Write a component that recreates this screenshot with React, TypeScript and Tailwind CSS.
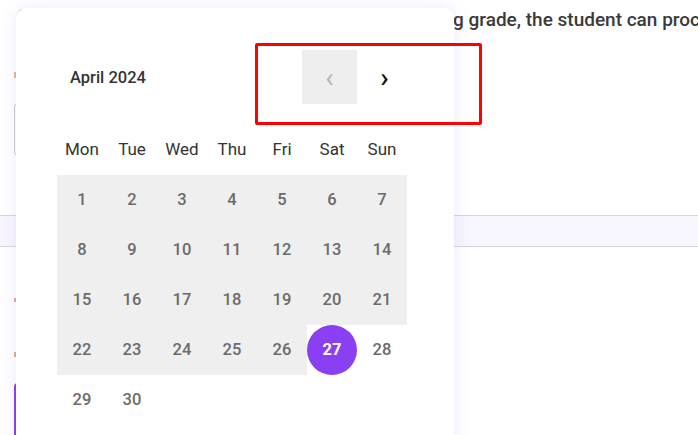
import React from "react";

const days = ["Mon", "Tue", "Wed", "Thu", "Fri", "Sat", "Sun"];

export default function App() {
  const cells: number[] = [];
  for (let i = 1; i <= 30; i++) cells.push(i);
  return (
    <div
      className="relative w-[698px] h-[435px] overflow-hidden bg-white"
      style={{ fontFamily: "Roboto, 'Noto Sans', sans-serif" }}
    >
      {/* background page (mostly covered by the popup) */}
      <div className="flex flex-col w-full">
        <div className="h-[8px] overflow-visible pl-[16px] pt-[6px] text-[24px] font-bold leading-[24px] text-[#222] whitespace-nowrap">
          Calculating final grades
        </div>
        <div className="flex pl-[453px] pt-[3px] h-[30px] whitespace-nowrap text-[19px] font-medium leading-[18px] text-[#3a3a3a]">
          g grade, the student can proceed to the next level
        </div>
        <div className="flex flex-col pl-[14px]">
          <div className="mt-[34px] w-[4px] h-[6px] bg-[#e8b98a]" />
          <div className="mt-[25px] w-[200px] h-[53px] rounded-[4px] border border-[#c9c9cc]" />
        </div>
        <div className="mt-[59px] w-full h-[32px] border-y border-[#d6d5db] bg-[#f8f6fe]" />
        <div className="flex flex-col pl-[14px]">
          <div className="mt-[51px] w-[4px] h-[4px] bg-[#e3a98a]" />
          <div className="mt-[50px] w-[4px] h-[5px] bg-[#e0ad80]" />
          <div className="mt-[26px] w-[120px] h-[60px] rounded-[4px] bg-[#8b3ff2]" />
        </div>
      </div>

      {/* popup */}
      <div className="absolute left-[16px] top-[8px] w-[438px] h-[450px] rounded-[10px] bg-white shadow-[0_0_18px_rgba(124,77,230,0.12)]">
        <div className="flex items-center pt-[42px] h-[96px]">
          <div className="pl-[54px] w-[286px] pt-[3px] text-[16.5px] font-medium text-[#333]">April 2024</div>
          <button className="w-[55px] h-[54px] bg-[#eeeeee] flex items-center justify-center text-[28px] leading-none pt-[2px] text-[#b5b5b5]">
            ‹
          </button>
          <button className="w-[55px] h-[54px] flex items-center justify-center text-[28px] leading-none pt-[2px] font-medium text-[#111]">
            ›
          </button>
        </div>
        <div className="pl-[41px] pt-[21px]">
          <div className="grid grid-cols-[repeat(7,50px)]">
            {days.map((d) => (
              <div key={d} className="h-[50px] flex items-center justify-center text-[17px] text-[#333]">
                {d}
              </div>
            ))}
            {cells.map((n) => {
              const shaded = n <= 26;
              const sel = n === 27;
              return (
                <div
                  key={n}
                  className={`h-[50px] flex items-center justify-center ${shaded ? "bg-[#efefef]" : ""}`}
                >
                  {sel ? (
                    <div className="w-[50px] h-[50px] rounded-full bg-[#8b3ff2] flex items-center justify-center text-[16.5px] font-bold text-white">
                      {n}
                    </div>
                  ) : (
                    <span className="text-[16.5px] font-medium text-[#6a6a6a]">{n}</span>
                  )}
                </div>
              );
            })}
          </div>
        </div>
      </div>

      {/* annotation */}
      <div className="absolute left-[255px] top-[43px] w-[227px] h-[82px] border-[3px] border-[#ff0000] rounded-[2px]" />
    </div>
  );
}
